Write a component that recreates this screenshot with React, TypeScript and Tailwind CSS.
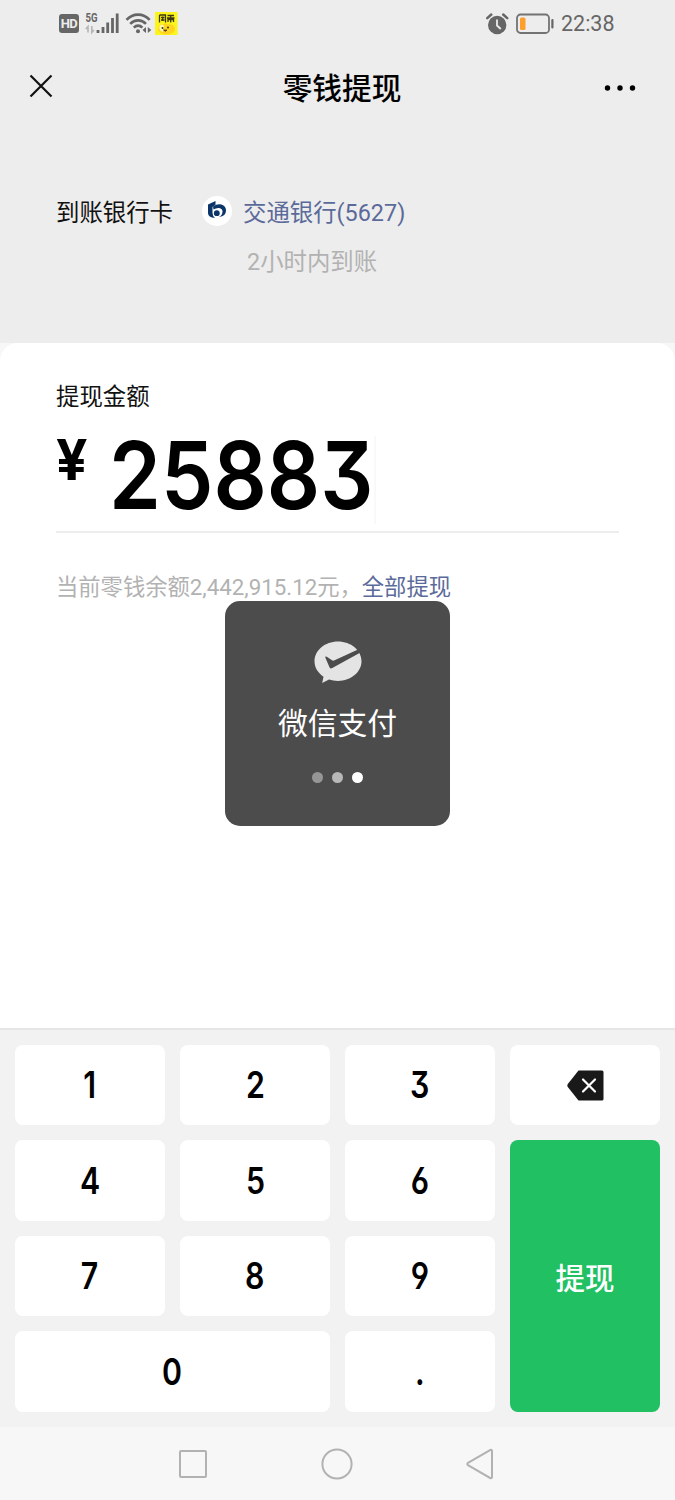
import { clsx } from "clsx";

const CJK = "font-[Roboto,'Noto_Sans_CJK_SC',sans-serif]";
const NUM = "font-[Inter,sans-serif] [font-feature-settings:'cv09','cv03','cv04']";

const KEYS = ["1", "2", "3", "del", "4", "5", "6", "ok", "7", "8", "9", "0", "."];

function StatusBar() {
  return (
    <div className="flex h-[47px] items-center justify-between pl-[59px] pr-[60px] text-[#666]">
      <div className="flex h-6 items-center">
        <span className="flex h-[19px] w-5 items-center justify-center rounded-[3px] bg-[#666] text-[13px] font-bold leading-none tracking-tighter text-[#ededed]">
          HD
        </span>
        <svg className="ml-[6px]" width="35" height="24" viewBox="0 0 35 24">
          <text x="0.500" y="9.500" fontSize="12" fontWeight="700" textLength="12" lengthAdjust="spacingAndGlyphs" fill="#666">5G</text>
          <path d="M3 20.500v-6L.8 17M6.800 14v6.500l2.200-2.500" stroke="#b5b5b5" strokeWidth="1.600" fill="none" />
          <path d="M13 21v-3M18 21v-6M22.700 21v-10.500M27.500 21V6M32.200 21V1.500" stroke="#666" strokeWidth="2.800" />
        </svg>
        <svg className="ml-[5px]" width="28" height="24" viewBox="0 0 28 24">
          <g fill="none" stroke="#666" strokeWidth="2.600">
            <path d="M1.500 7.800C8 .9 18.200.9 24.700 7.800" />
            <path d="M5.200 11.800c4.500-4.600 11.300-4.600 15.800 0" />
            <path d="M8.800 15.600c2.600-2.600 6-2.600 8.600 0" />
          </g>
          <circle cx="13" cy="19.300" r="2" fill="#666" />
          <path d="M21 15v6l-3.500-3zM22.800 15v6l3.500-3z" fill="#666" />
        </svg>
        <svg className="ml-[2px]" width="23" height="23" viewBox="0 0 23 23">
          <rect width="22.500" height="23" fill="#fbf51c" />
          <path d="M4.500 3v7.500M4.500 3h6v7.500M6 5.500h3.500M6 8h3.500M7.700 4.500V9M12.500 3.500h6.500M12 6h7.500M15.700 3v7.500M13 10V7.500h5.500V10" stroke="#3c3910" strokeWidth="1.300" fill="none" />
          <ellipse cx="11.500" cy="17" rx="8.500" ry="5.500" fill="#ffd51f" />
          <path d="M5 14q2-3 4 0l-1 6q-3-1-4-4z" fill="#fff8b0" />
          <circle cx="7.500" cy="16" r="1" fill="#3c3910" />
          <circle cx="13" cy="15.500" r="1" fill="#3c3910" />
          <path d="M8.500 18q2 2.500 3.500 0z" fill="#a34a19" stroke="#3c3910" strokeWidth=".7" />
        </svg>
      </div>
      <div className="flex items-center">
        <svg width="23" height="22" viewBox="0 0 23 22">
          <circle cx="11.200" cy="12" r="9.200" fill="#666" />
          <path d="M1.300 5.200 5.300 1.500M17.200 1.500l4 3.700" stroke="#666" strokeWidth="2.500" strokeLinecap="round" />
          <path d="M11 6.500v6l3.800 3.500" fill="none" stroke="#ededed" strokeWidth="1.800" />
        </svg>
        <svg className="ml-[7px]" width="39" height="22" viewBox="0 0 39 22">
          <rect x="1" y="1.500" width="32" height="18.500" rx="3.500" fill="none" stroke="#737373" strokeWidth="1.800" />
          <rect x="4" y="4.500" width="5.500" height="12.500" rx="1.500" fill="#ff9e2c" />
          <rect x="35.300" y="6" width="2.200" height="9.500" rx="1" fill="#666" />
        </svg>
        <span className="ml-[6px] w-[54px] whitespace-nowrap text-[21.500px] leading-none">22:38</span>
      </div>
    </div>
  );
}

function Header() {
  return (
    <header className="flex h-[81px] items-center justify-between pl-[29px] pr-[39px]">
      <svg className="-mt-[3px]" width="24" height="24" viewBox="0 0 24 24">
        <path d="m1.500 1.500 21 21M22.500 1.500l-21 21" stroke="#111" strokeWidth="2.200" />
      </svg>
      <h1 className="ml-[27px] mt-[3px] text-[29.700px] font-medium leading-none text-black">零钱提现</h1>
      <svg width="32" height="8" viewBox="0 0 32 8">
        <circle cx="3.500" cy="4" r="2.700" />
        <circle cx="16" cy="4" r="2.700" />
        <circle cx="28.500" cy="4" r="2.700" />
      </svg>
    </header>
  );
}

function BankRow() {
  return (
    <section className="h-[215px] pt-[70px] pl-[56px]">
      <div className="flex h-8 items-center text-[23.400px] leading-none">
        <span className="w-[146px] text-[#111]">到账银行卡</span>
        <svg className="-mt-[6px]" width="30" height="30" viewBox="0 0 30 30">
          <circle cx="15" cy="15" r="15" fill="#fff" />
          <path d="M6 8.500 13.500 5v3.800L10.500 11v6q0 3 2.500 5Q6 21.500 6 17z" fill="#0b3468" />
          <path d="M11 10.500Q15 7.500 19.500 8.500q4.500 1.500 4.500 6 0 5.500-7 6.500 3.500-2 3.500-5.500 0-3-3.500-3.500-3-.2-5.500 1.500z" fill="#0b3468" />
          <circle cx="14.800" cy="17.200" r="2.900" fill="#0b3468" />
        </svg>
        <span className="ml-[11px] text-[#5b6a9a]">交通银行(5627)</span>
      </div>
      <p className="mt-[21px] ml-[191px] text-[23.400px] leading-none text-[#b2b2b2]">2小时内到账</p>
    </section>
  );
}

function Amount() {
  return (
    <div className="bg-[#f7f7f7]">
      <section className="h-[685px] rounded-t-[18px] bg-white px-[56px] pt-[43px]">
        <p className="text-[23.400px] leading-none text-[#111]">提现金额</p>
        <div className="mt-[21px] flex h-[103px] items-start border-b-2 border-[#ededed]">
          <span className={clsx(NUM, "mt-[1px] w-[53px] text-[57px] font-bold leading-none")}>
            <span className="inline-block origin-left scale-x-[0.97]">¥</span>
          </span>
          <div className="w-[265px]">
            <span className={clsx(NUM, "-mt-[2px] inline-block origin-left scale-x-[0.887] text-[94px] font-semibold leading-none")}>25883</span>
          </div>
          <span className="mt-[6px] h-[88px] w-[2px] bg-[#f7fafa]" />
        </div>
        <p className="mt-[43px] whitespace-nowrap text-[22.300px] leading-none text-[#b2b2b2]">
          当前零钱余额2,442,915.12元，<span className="text-[#5b6a9a]">全部提现</span>
        </p>
      </section>
    </div>
  );
}

function PayToast() {
  return (
    <div className="absolute left-[225px] top-[601px] flex h-[225px] w-[225px] flex-col items-center rounded-[15px] bg-[#4c4c4c] pt-[40px]">
      <svg width="48" height="43" viewBox="0 0 48 43">
        <path d="M24 .5C11 .5.500 9.300.500 20.300c0 6.200 3.500 11.800 9 15.400L8.200 42l6.800-3.500c2.800.9 5.800 1.400 9 1.400 13 0 23.500-8.800 23.500-19.600C47.500 9.300 37 .5 24 .5z" fill="#e4e4e4" />
        <path d="M43.500 8.700 20 19.500q-1 .4-2-.3L12.800 15.800q-2-.8-1.400 1l4.200 9.600q.9 1.700 2.700.6L46 11.700z" fill="#4c4c4c" />
      </svg>
      <p className="mt-[25px] text-[29.800px] leading-none text-white">微信支付</p>
      <div className="mt-[33px] flex gap-[9px]">
        <span className="size-[11px] rounded-full bg-[#969696]" />
        <span className="size-[11px] rounded-full bg-[#b8b8b8]" />
        <span className="size-[11px] rounded-full bg-white" />
      </div>
    </div>
  );
}

function Keypad() {
  return (
    <div className="grid h-[399px] grid-cols-4 grid-rows-4 gap-[15px] border-t-2 border-[#e6e6e6] bg-[#f2f2f2] px-[15px] pt-[14.500px] pb-[15px]">
      {KEYS.map((key) => {
        if (key === "ok") {
          return (
            <button key={key} className="row-span-3 rounded-[8px] bg-[#20c063] pt-[7px] text-[29.500px] font-medium leading-none text-white">
              提现
            </button>
          );
        }
        return (
          <button
            key={key}
            className={clsx(
              NUM,
              "flex items-center justify-center rounded-[8px] bg-white pt-[1px] text-[36.500px] font-semibold leading-none text-black",
              key === "0" && "col-span-2"
            )}
          >
            {key === "del" ? (
              <svg width="37" height="31" viewBox="0 0 37 31">
                <path d="M11.500.5H35q1.500 0 1.500 1.500v27q0 1.500-1.500 1.500H11.500L.8 17q-1-1.500 0-3z" fill="#191919" />
                <path d="m16 9.500 12 12M28 9.500l-12 12" stroke="#fff" strokeWidth="2.200" strokeLinecap="round" />
              </svg>
            ) : (
              <span className="scale-x-[0.83]">{key}</span>
            )}
          </button>
        );
      })}
    </div>
  );
}

function NavBar() {
  return (
    <nav className="flex h-[73px] items-center justify-between bg-[#f7f7f7] pl-[178px] pr-[181px]">
      <svg width="30" height="30" viewBox="0 0 30 30">
        <rect x="2" y="2" width="26" height="26" rx="1" fill="none" stroke="#b2b2b2" strokeWidth="2" />
      </svg>
      <svg width="32" height="32" viewBox="0 0 32 32">
        <circle cx="16" cy="16" r="14.600" fill="none" stroke="#b2b2b2" strokeWidth="2" />
      </svg>
      <svg width="28" height="32" viewBox="0 0 28 32">
        <path d="M24.500 1.800 2 14.800q-1.500 1.200 0 2.400l22.500 13q1.500.3 1.500-1.200V3q0-1.500-1.500-1.200z" fill="none" stroke="#b2b2b2" strokeWidth="2" />
      </svg>
    </nav>
  );
}

export default function App() {
  return (
    <div className={clsx(CJK, "relative h-[1500px] w-[675px] overflow-hidden bg-[#ededed]")}>
      <StatusBar />
      <Header />
      <BankRow />
      <Amount />
      <Keypad />
      <NavBar />
      <PayToast />
    </div>
  );
}
